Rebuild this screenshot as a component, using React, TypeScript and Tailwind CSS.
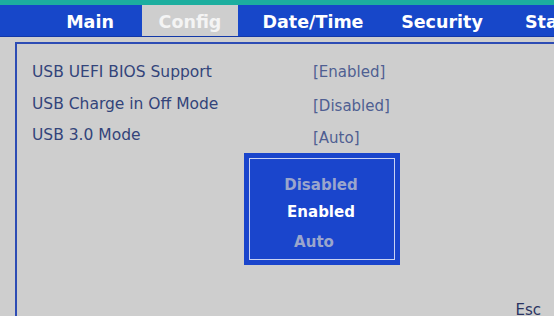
import React from "react";

const tabs = [
  { label: "Main", w: "w-[104px]", active: false },
  { label: "Config", w: "w-[96px]", active: true },
  { label: "Date/Time", w: "w-[150px]", active: false },
  { label: "Security", w: "w-[108px]", active: false },
];

const rows = [
  { label: "USB UEFI BIOS Support", value: "[Enabled]", off: "mt-0" },
  { label: "USB Charge in Off Mode", value: "[Disabled]", off: "mt-[2px]" },
  { label: "USB 3.0 Mode", value: "[Auto]", off: "mt-[3px]" },
];

export default function App() {
  return (
    <div
      className="relative w-[554px] h-[316px] overflow-hidden bg-[#cecece] flex flex-col"
      style={{ fontFamily: '"DejaVu Sans", Verdana, sans-serif' }}
    >
      <div className="h-[5px] bg-[#1cae9f] shrink-0" />
      <div className="h-[32px] bg-[#1747c9] flex items-stretch pl-[38px] shrink-0 border-b border-[#1238a8]">
        {tabs.map((t) => (
          <div
            key={t.label}
            className={`${t.w} shrink-0 flex items-center justify-center pt-[4px] text-[17.5px] font-bold ${
              t.active ? "bg-[#cecece] text-[#f4f4f4]" : "text-white"
            }`}
          >
            {t.label}
          </div>
        ))}
        <div className="flex items-center pt-[4px] pl-[29px] text-[17.5px] font-bold text-white whitespace-nowrap">
          Status
        </div>
      </div>
      <div className="h-[5px] shrink-0" />
      <div className="flex-1 ml-[15px] border-l-2 border-t-2 border-[#2d4cb4] pl-[15px] pt-[18px] flex flex-col">
        {rows.map((r) => (
          <div key={r.label} className="flex h-[31.5px] leading-[20px]">
            <div className="w-[281px] text-[15.5px] text-[#33447a]">{r.label}</div>
            <div className={`${r.off} text-[15px] text-[#4f5f92]`}>{r.value}</div>
          </div>
        ))}
        <div className="flex-1" />
        <div className="flex justify-end pr-[13px] text-[15px] leading-[16px] text-[#2a3462] translate-y-[2px]">
          Esc
        </div>
      </div>
      <div className="absolute left-[244px] top-[153px] w-[156px] h-[112px] bg-[#1a45cc] p-[5px]">
        <div className="w-full h-full border-[1.5px] border-[#c9d2f2] flex flex-col items-center text-[15px] font-bold leading-[18px] pt-[17px]">
          <div className="text-[#9aa6cc] -translate-x-[1px]">Disabled</div>
          <div className="text-white mt-[9px] -translate-x-[1px]">Enabled</div>
          <div className="text-[#9aa6cc] mt-[12px] -translate-x-[8px]">Auto</div>
        </div>
      </div>
    </div>
  );
}
